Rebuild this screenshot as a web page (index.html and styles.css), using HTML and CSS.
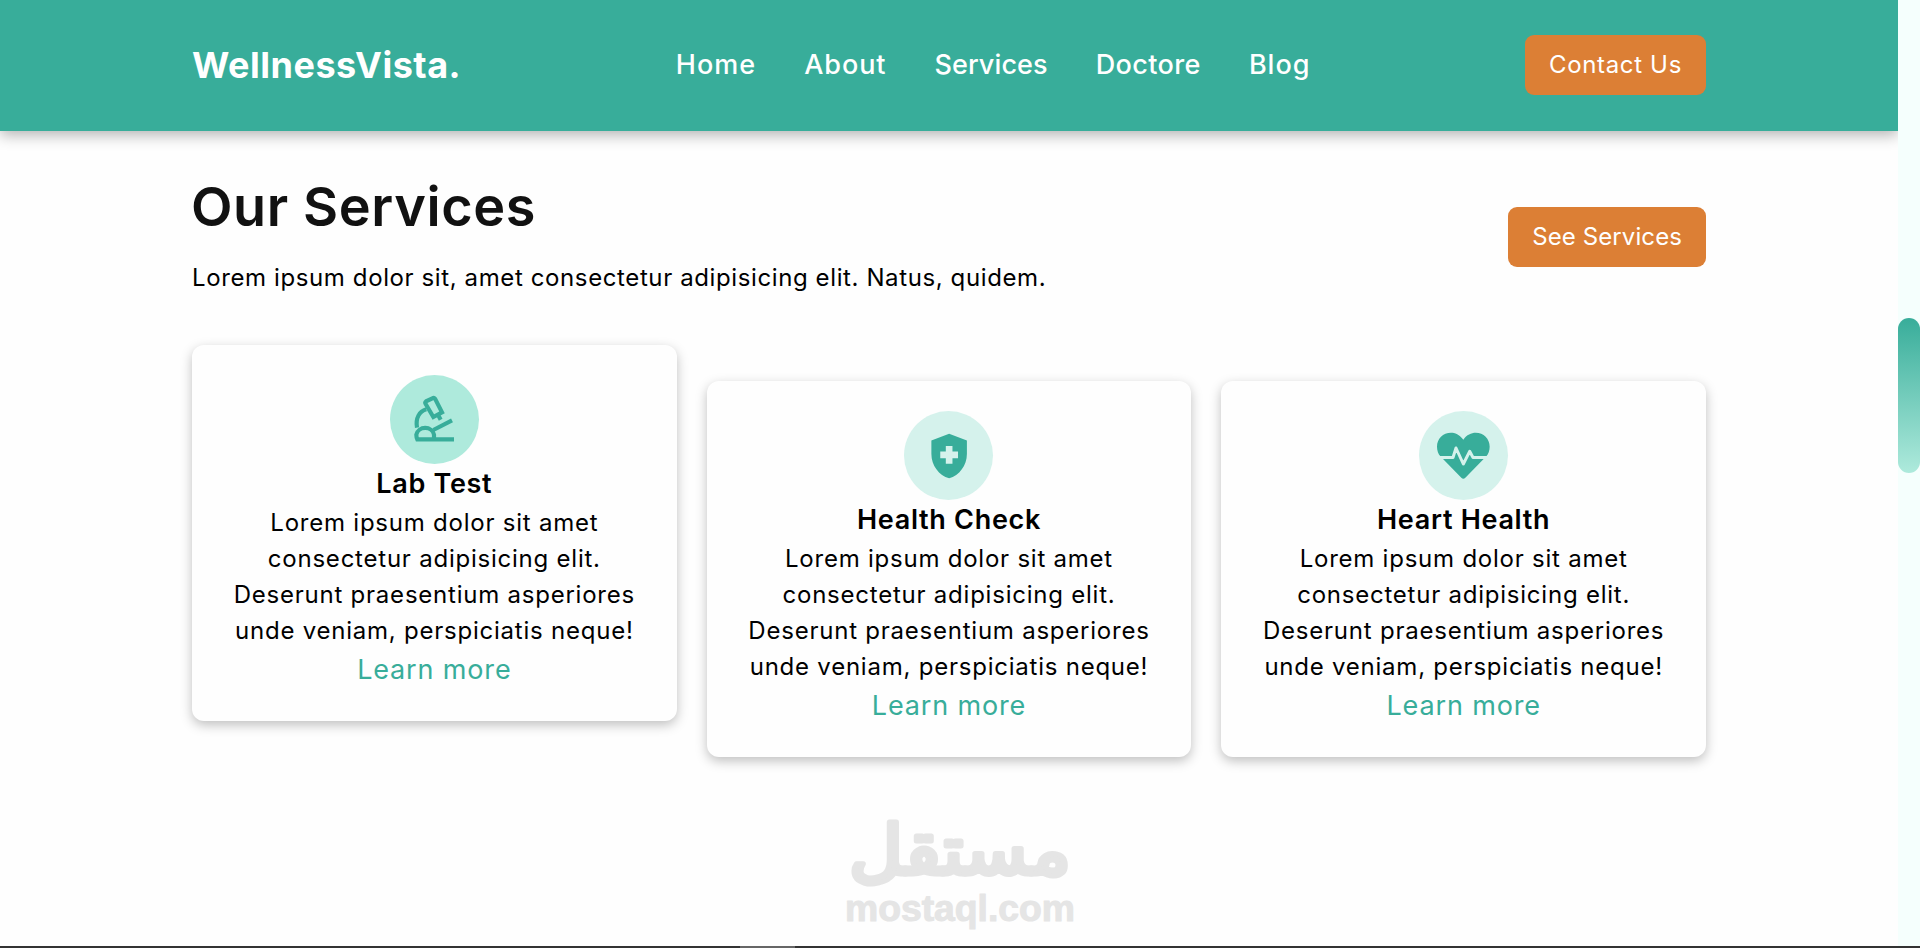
FILE: index.html
```html
<!DOCTYPE html>
<html lang="en">

<head>
    <meta charset="UTF-8">
    <meta name="viewport" content="width=device-width, initial-scale=1.0">
    <title>WellnessVista - Our Services</title>
    <link rel="stylesheet" href="styles.css">
</head>

<body>
    <div class="page">
        <header>
            <div class="container header-inner">
                <a href="#" class="logo">WellnessVista.</a>
                <nav>
                    <ul>
                        <li class="home"><a href="#">Home</a></li>
                        <li class="about"><a href="#">About</a></li>
                        <li class="services"><a href="#">Services</a></li>
                        <li class="doctore"><a href="#">Doctore</a></li>
                        <li class="blog"><a href="#">Blog</a></li>
                    </ul>
                </nav>
                <a href="#" class="btn">Contact Us</a>
            </div>
        </header>

        <main class="container">
            <div class="services-top">
                <div class="services-text">
                    <h2>Our Services</h2>
                    <p>Lorem ipsum dolor sit, amet consectetur adipisicing elit. Natus, quidem.</p>
                </div>
                <a href="#" class="btn btn-services">See Services</a>
            </div>

            <div class="cards">
                <div class="card active">
                    <div class="icon">
                        <svg viewBox="30 29 267 267" fill="none" stroke="#38ad9a" stroke-width="12.5">
                            <path d="M160 155L137 116Q134 111 138 108L157 99Q162 96 165 100L186 141Z" />
                            <path d="M174 148L182 163" />
                            <path d="M139 132C118 138 106 158 111 187" />
                            <path d="M162 222V208A27 25 0 0 0 109 208Q109 215 112 222H222" />
                            <path d="M160 194L216 165" />
                        </svg>
                    </div>
                    <h3>Lab Test</h3>
                    <p>Lorem ipsum dolor sit amet consectetur adipisicing elit. Deserunt praesentium asperiores unde veniam, perspiciatis neque!</p>
                    <a href="#" class="more">Learn more</a>
                </div>

                <div class="card">
                    <div class="icon">
                        <svg viewBox="27 31 267 267" fill="#38ad9a">
                            <path transform="translate(82.5 86) scale(6.66)" d="M10.5 13H8v-3h2.5V7.5h3V10H16v3h-2.5v2.5h-3zM12 2L4 5v6.09c0 5.05 3.41 9.76 8 10.91 4.59-1.15 8-5.86 8-10.91V5z" fill-rule="evenodd" />
                        </svg>
                    </div>
                    <h3>Health Check</h3>
                    <p>Lorem ipsum dolor sit amet consectetur adipisicing elit. Deserunt praesentium asperiores unde veniam, perspiciatis neque!</p>
                    <a href="#" class="more">Learn more</a>
                </div>

                <div class="card">
                    <div class="icon">
                        <svg viewBox="27 31 267 267">
                            <path fill="#38ad9a" d="M160 117C149 101 134 96 123 96C99 96 81 114 81 138C81 150 85 160 91 167L154 231Q160 237 166 231L229 167C235 160 239 150 239 138C239 114 221 96 197 96C184 96 170 102 160 117Z" />
                            <path fill="none" stroke="#d5f2ec" stroke-width="9" stroke-linejoin="round" d="M82 170.500H129L138 142L160 190L179 152L189 170.500H238" />
                        </svg>
                    </div>
                    <h3>Heart Health</h3>
                    <p>Lorem ipsum dolor sit amet consectetur adipisicing elit. Deserunt praesentium asperiores unde veniam, perspiciatis neque!</p>
                    <a href="#" class="more">Learn more</a>
                </div>
            </div>
        </main>
    </div>

    <!-- scrollbar -->
    <div class="scrollbar">
        <div class="thumb"></div>
    </div>

    <div class="watermark">
        <svg width="240" height="120" viewBox="0 0 240 120">
            <text class="wm-ar" x="120" y="56" text-anchor="middle" textLength="222" lengthAdjust="spacingAndGlyphs" lang="ar">مستقل</text>
            <text class="wm-en" x="5" y="103" textLength="230" lengthAdjust="spacingAndGlyphs">mostaql.com</text>
        </svg>
    </div>

    <div class="bottom-bar">
        <div class="bottom-tab"></div>
    </div>
</body>

</html>
```
FILE: styles.css
```css
* {
    box-sizing: border-box;
    margin: 0;
    padding: 0;
}

body {
    font-family: Inter, sans-serif;
    font-size: 24px;
    line-height: 1.5;
    color: #000;
    background-color: #fefefe;
    height: 948px;
    display: flex;
    position: relative;
    overflow: hidden;
}

a {
    text-decoration: none;
}

.page {
    flex: 1;
    overflow: hidden;
}

.container {
    width: 1514px;
    margin: 0 auto;
}

header {
    background-color: #38ad9a;
    box-shadow: 0 4px 14px rgba(0, 0, 0, 0.3);
}

.header-inner {
    height: 131px;
    padding-bottom: 2px;
    display: flex;
    align-items: center;
    justify-content: space-between;
}

.logo {
    color: #fff;
    font-size: 36px;
    font-weight: 700;
    line-height: 54px;
    letter-spacing: 0.5px;
}

nav ul {
    list-style: none;
    display: flex;
    gap: 48px;
    padding-top: 1px;
}

nav a {
    color: #fff;
    font-size: 27px;
    font-weight: 500;
}

.home {
    letter-spacing: 1.1px;
}

.about {
    letter-spacing: 0.9px;
}

.services {
    letter-spacing: 0.1px;
}

.doctore {
    letter-spacing: 0.4px;
}

.blog {
    letter-spacing: 1px;
}

.btn {
    background-color: #dc7f35;
    color: #fff;
    padding: 12px 24px;
    border-radius: 9px;
    letter-spacing: 0.66px;
}

.btn-services {
    letter-spacing: 0.1px;
}

.services-top {
    display: flex;
    align-items: center;
    justify-content: space-between;
    padding-top: 35px;
    margin-bottom: 38px;
}

.services-text h2 {
    font-size: 54px;
    font-weight: 600;
    color: #111;
    letter-spacing: 0.6px;
    margin: 0 0 13px -1px;
}

.services-text p {
    letter-spacing: 0.61px;
    margin-bottom: 11px;
}

.cards {
    display: grid;
    grid-template-columns: repeat(3, 1fr);
    gap: 30px;
}

.card {
    height: 376px;
    margin-top: 36px;
    padding: 30px;
    border-radius: 12px;
    background-color: #fefefe;
    box-shadow: 0 4px 12px rgba(0, 0, 0, 0.25);
    text-align: center;
}

.card.active {
    margin-top: 0;
}

.icon {
    width: 89px;
    height: 89px;
    margin: 0 auto;
    border-radius: 50%;
    background-color: #d5f2ec;
}

.active .icon {
    background-color: #aeeadc;
}

.icon svg {
    display: block;
    width: 89px;
    height: 89px;
}

.card h3 {
    font-size: 27px;
    font-weight: 600;
    line-height: 39px;
    letter-spacing: 0.7px;
    padding-bottom: 2px;
}

.card p {
    letter-spacing: 0.77px;
}

.more {
    display: block;
    color: #38ad9a;
    font-size: 27px;
    line-height: 42px;
    letter-spacing: 0.85px;
}

.scrollbar {
    width: 22px;
    padding-top: 318px;
    background-color: #f5fffd;
}

.thumb {
    height: 155px;
    border-radius: 11px;
    background: linear-gradient(#38ad9a, #aeeadc);
}

.watermark {
    position: absolute;
    left: 840px;
    top: 818px;
}

.watermark svg {
    display: block;
    overflow: visible;
}

.watermark text {
    fill: #e5e5e5;
    stroke: #e5e5e5;
    stroke-linejoin: round;
    stroke-linecap: round;
}

.wm-ar {
    font-family: "DejaVu Sans", sans-serif;
    font-size: 68px;
    stroke-width: 5px;
}

.wm-en {
    font-family: "Liberation Sans", sans-serif;
    font-size: 36px;
    font-weight: 700;
}

.bottom-bar {
    position: absolute;
    left: 0;
    bottom: 0;
    width: 100%;
    height: 2px;
    padding-left: 740px;
    background-color: #333;
}

.bottom-tab {
    width: 55px;
    height: 2px;
    background-color: #666;
}
```
